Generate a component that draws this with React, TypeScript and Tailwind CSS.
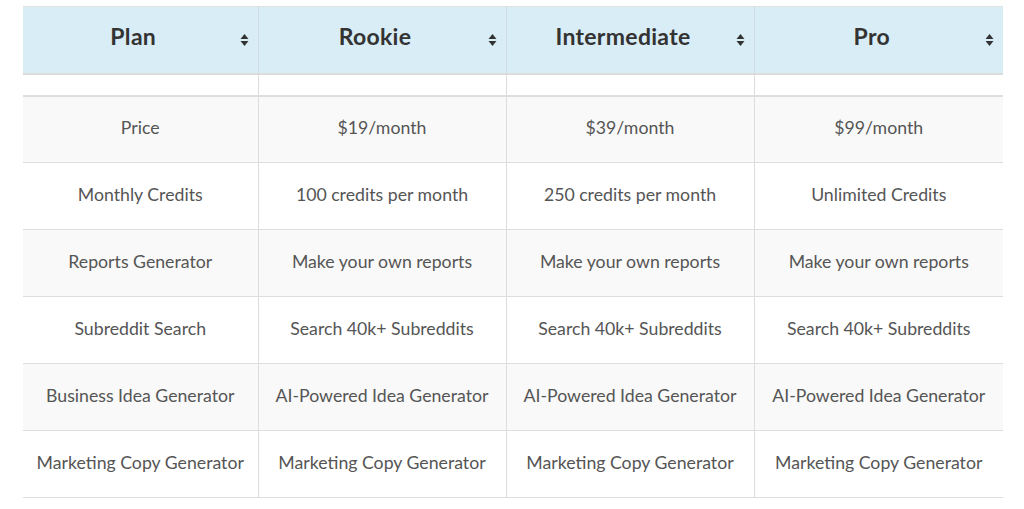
import { useState } from 'react';

const plans = ['Plan', 'Rookie', 'Intermediate', 'Pro'];

const rows: string[][] = [
  ['Price', '$19/month', '$39/month', '$99/month'],
  ['Monthly Credits', '100 credits per month', '250 credits per month', 'Unlimited Credits'],
  ['Reports Generator', 'Make your own reports', 'Make your own reports', 'Make your own reports'],
  ['Subreddit Search', 'Search 40k+ Subreddits', 'Search 40k+ Subreddits', 'Search 40k+ Subreddits'],
  ['Business Idea Generator', 'AI-Powered Idea Generator', 'AI-Powered Idea Generator', 'AI-Powered Idea Generator'],
  ['Marketing Copy Generator', 'Marketing Copy Generator', 'Marketing Copy Generator', 'Marketing Copy Generator'],
];

const widths = ['w-[235px]', 'w-[248px]', 'w-[248px]', 'w-[249px]'];

function SortIcon() {
  return (
    <svg width="9" height="13" viewBox="0 0 9 13" className="shrink-0">
      <path d="M4.5 0.5 L8.5 5.5 L0.5 5.5 Z" fill="#333" />
      <path d="M4.5 12.5 L8.5 7.5 L0.5 7.5 Z" fill="#333" />
    </svg>
  );
}

export default function App() {
  const [sortCol, setSortCol] = useState<number | null>(null);

  return (
    <div className="w-[1024px] h-[509px] bg-white pt-[6px] pl-[23px]">
      <table className="w-[980px] table-fixed border-collapse font-['Lato','Liberation_Sans',sans-serif] text-[17.7px] text-[#555]">
        <thead>
          <tr className="bg-[#d9edf7] border-t border-[#e3e3e3] border-b-2 border-b-[#dcdcdc]">
            {plans.map((p, i) => (
              <th
                key={p}
                onClick={() => setSortCol(i)}
                className={`${widths[i]} h-[67px] p-0 border-l border-r border-[#d6dde2] first:border-l-0 last:border-r-0 cursor-pointer`}
              >
                <div className="relative flex items-center justify-center pr-[14px]">
                  <span
                    className={`font-['Lato','Liberation_Sans',sans-serif] text-[23px] leading-none font-bold tracking-[0.3px] pb-[6px] ${
                      sortCol === i ? 'text-[#111]' : 'text-[#333]'
                    }`}
                  >
                    {p}
                  </span>
                  <span className="absolute right-[9px] top-1/2 -translate-y-1/2 flex">
                    <SortIcon />
                  </span>
                </div>
              </th>
            ))}
          </tr>
        </thead>
        <tbody>
          <tr className="h-[22px] border-b-2 border-[#dedede]">
            {plans.map((p, i) => (
              <td key={p} className={`p-0 border-l border-r border-[#ddd] ${i === 0 ? 'border-l-0' : ''} ${i === 3 ? 'border-r-0' : ''}`} />
            ))}
          </tr>
          {rows.map((r, ri) => (
            <tr key={r[0]} className={`h-[67px] border-b border-[#dddddd] ${ri % 2 === 0 ? 'bg-[#f9f9f9]' : 'bg-white'}`}>
              {r.map((c, ci) => (
                <td
                  key={ci}
                  className={`p-0 pb-[2px] text-center whitespace-nowrap border-l border-r border-[#dddddd] ${ci === 0 ? 'border-l-0' : ''} ${ci === 3 ? 'border-r-0' : ''}`}
                >
                  {c}
                </td>
              ))}
            </tr>
          ))}
        </tbody>
      </table>
    </div>
  );
}
